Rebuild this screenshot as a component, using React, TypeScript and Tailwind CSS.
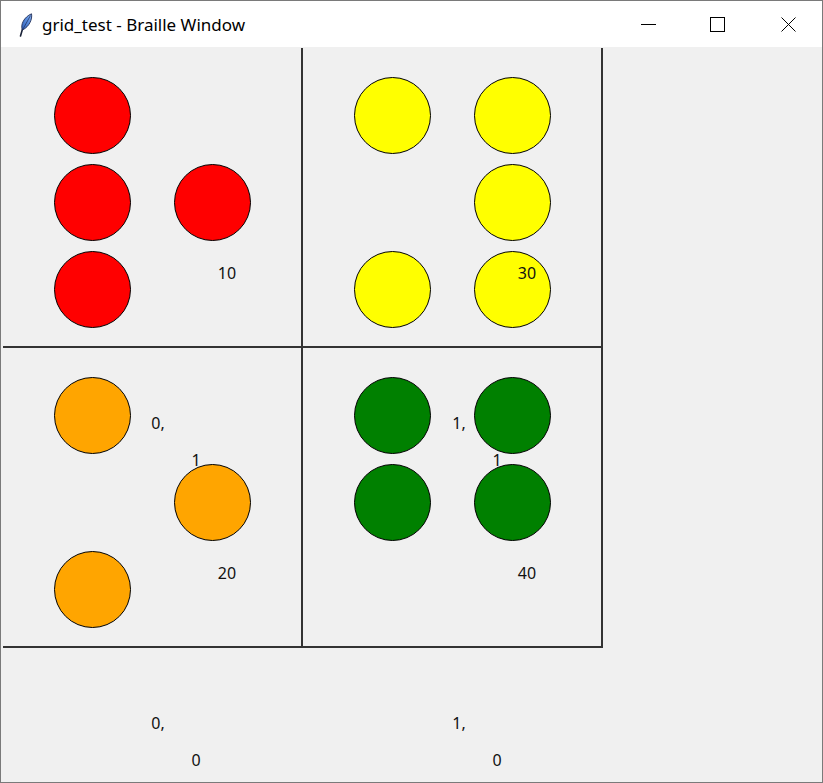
import React from "react";

type Dot = [number, number];

const COLS = ["left-[51px]", "left-[171px]"];
const ROWS = ["top-[29px]", "top-[116px]", "top-[203px]"];

function Circle({ c, r, color }: { c: number; r: number; color: string }) {
  return (
    <div
      className={`absolute ${COLS[c]} ${ROWS[r]} w-[77px] h-[77px] rounded-full border border-black ${color}`}
    />
  );
}

function Label({ pos, text }: { pos: string; text: string }) {
  return (
    <span
      className={`absolute ${pos} -translate-x-1/2 -translate-y-1/2 leading-none whitespace-nowrap text-[16px] text-[#111]`}
    >
      {text}
    </span>
  );
}

function Cell({
  dots,
  color,
  children,
}: {
  dots: Dot[];
  color: string;
  children?: React.ReactNode;
}) {
  return (
    <div className="relative w-[300px] h-[300px] border-r-2 border-b-2 border-[#333]">
      {dots.map(([c, r], i) => (
        <Circle key={i} c={c} r={r} color={color} />
      ))}
      {children}
    </div>
  );
}

function Feather() {
  return (
    <svg width="16" height="24" viewBox="0 0 16 24">
      <defs>
        <linearGradient id="fg" x1="0" y1="1" x2="1" y2="0">
          <stop offset="0" stopColor="#2f5fb8" />
          <stop offset="0.6" stopColor="#5b8fe0" />
          <stop offset="1" stopColor="#8fb6f0" />
        </linearGradient>
      </defs>
      <path d="M5.5 16 L3.5 23" stroke="#1b2238" strokeWidth="1.6" strokeLinecap="round" />
      <path
        d="M5.5 17 C 3 12, 7 4, 14.5 0.8 C 15.5 6, 12.5 13.5, 5.5 17 Z"
        fill="url(#fg)"
        stroke="#1d2b57"
        strokeWidth="0.9"
      />
      <path d="M6 16 L13.5 2.5" stroke="#1d2b57" strokeWidth="0.7" />
    </svg>
  );
}

export default function App() {
  const font = { fontFamily: '"Noto Sans", "Open Sans", sans-serif' };
  return (
    <div
      className="w-[823px] h-[783px] border border-[#7a7a7a] flex flex-col bg-[#f0f0f0] overflow-hidden"
      style={font}
    >
      {/* Title bar */}
      <div className="h-[46px] bg-white flex items-center shrink-0">
        <div className="ml-[16px] mt-[1px]">
          <Feather />
        </div>
        <span className="ml-[9px] text-[17px] text-black leading-none">
          grid_test - Braille Window
        </span>
        <div className="ml-auto flex items-center mr-[26px]">
          <div className="w-[15px] h-[15px] flex items-center">
            <div className="w-[15px] h-px bg-black mt-[1px]" />
          </div>
          <div className="ml-[54px] w-[15px] h-[15px] border border-black" />
          <div className="ml-[56px] w-[15px] h-[15px]">
            <svg width="15" height="15" viewBox="0 0 15 15">
              <path d="M0.5 0.5 L14.5 14.5 M14.5 0.5 L0.5 14.5" stroke="#000" strokeWidth="1" />
            </svg>
          </div>
        </div>
      </div>

      {/* Canvas area */}
      <div className="relative flex-1 pl-[2px] pt-[1px]">
        <div className="grid grid-cols-[300px_300px]">
          <Cell color="bg-[#ff0000]" dots={[[0, 0], [0, 1], [1, 1], [0, 2]]}>
            <Label pos="left-[224px] top-[225px]" text="10" />
          </Cell>
          <Cell color="bg-[#ffff00]" dots={[[0, 0], [1, 0], [1, 1], [0, 2], [1, 2]]}>
            <Label pos="left-[224px] top-[225px]" text="30" />
          </Cell>
          <Cell color="bg-[#ffa500]" dots={[[0, 0], [1, 1], [0, 2]]}>
            <Label pos="left-[155px] top-[75px]" text="0," />
            <Label pos="left-[193px] top-[112px]" text="1" />
            <Label pos="left-[224px] top-[225px]" text="20" />
          </Cell>
          <Cell color="bg-[#008000]" dots={[[0, 0], [1, 0], [0, 1], [1, 1]]}>
            <Label pos="left-[156px] top-[75px]" text="1," />
            <Label pos="left-[194px] top-[112px]" text="1" />
            <Label pos="left-[224px] top-[225px]" text="40" />
          </Cell>
        </div>
        <Label pos="left-[157px] top-[676px]" text="0," />
        <Label pos="left-[195px] top-[713px]" text="0" />
        <Label pos="left-[458px] top-[676px]" text="1," />
        <Label pos="left-[496px] top-[713px]" text="0" />
      </div>
    </div>
  );
}
